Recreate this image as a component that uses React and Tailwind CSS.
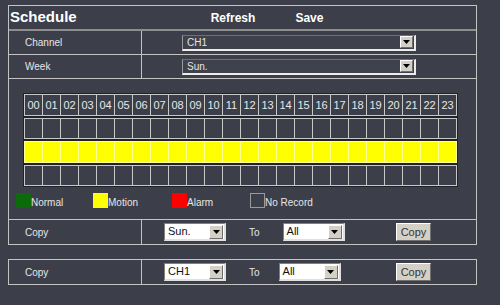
import React from 'react';

const hours = Array.from({ length: 24 }, (_, i) => String(i).padStart(2, '0'));

const Arrow = ({ className = '' }) => (
  <span
    className={`flex items-center justify-center bg-[#d4d0c8] border-t border-l border-t-white border-l-white border-b border-r border-b-[#6e6e6e] border-r-[#6e6e6e] ${className}`}
  >
    <svg width="7" height="4" viewBox="0 0 7 4">
      <path d="M0 0h7L3.5 4z" fill="#000" />
    </svg>
  </span>
);

const DarkSelect = ({ value }) => (
  <div className="flex h-[16px] w-[234px] items-center justify-between border-t border-l border-t-[#707070] border-l-[#9a9a9a] border-b-2 border-r-2 border-b-[#ececec] border-r-[#ececec] bg-[#3f424d] pl-[4px] pr-[1px]">
    <span className="text-[10px] text-[#e6e6e6]">{value}</span>
    <Arrow className="h-[12px] w-[13px]" />
  </div>
);

const WhiteSelect = ({ value }) => (
  <div className="flex h-[18px] w-[62px] items-center justify-between border-t border-l border-t-[#808080] border-l-[#808080] border-b-2 border-r-2 border-b-[#e0e0e0] border-r-[#e0e0e0] bg-white pl-[3px] pr-[1px]">
    <span className="text-[11px] leading-none text-[#111]">{value}</span>
    <Arrow className="h-[14px] w-[14px]" />
  </div>
);

const CopyButton = () => (
  <button className="flex h-[18px] w-[35px] items-center justify-center border-t border-l border-t-white border-l-white border-b border-r border-b-[#707070] border-r-[#707070] bg-[#d4d0c8] text-[11px] text-[#333]">
    Copy
  </button>
);

const CopyRow = ({ from, toLeft }) => (
  <div className="flex h-[24px]">
    <div className="flex w-[133px] items-center border-r border-[#c4c4c4] pl-[16px] text-[10px] text-[#e6e6e6]">
      Copy
    </div>
    <div className="flex flex-1 items-center">
      <div className="ml-[22px]">
        <WhiteSelect value={from} />
      </div>
      <span className="ml-[23px] text-[10px] text-[#e6e6e6]">To</span>
      <div className={toLeft}>
        <WhiteSelect value="All" />
      </div>
      <div className="ml-auto mr-[45px]">
        <CopyButton />
      </div>
    </div>
  </div>
);

const GridRow = ({ height, yellow, labels }) => (
  <div
    className={`flex ${height} border-r border-y ${
      yellow ? 'border-[#ffff99]' : 'border-[#c8c8c8]'
    } outline outline-[#202228]`}
  >
    {hours.map((h) => (
      <div
        key={h}
        className={`flex w-[18px] items-center justify-center border-l ${
          yellow ? 'border-[#ffff99] bg-[#ffff00]' : 'border-[#c8c8c8]'
        } text-[11px] text-[#e8e8e8]`}
      >
        {labels ? h : ''}
      </div>
    ))}
  </div>
);

const Legend = ({ color, label, box }) => (
  <div className="flex items-end">
    <span className={`block h-[15px] w-[15px] ${color} ${box || ''}`} />
    <span className="text-[10px] leading-[11px] text-[#e6e6e6]">{label}</span>
  </div>
);

export default function App() {
  return (
    <div
      className="h-[305px] w-[500px] overflow-hidden bg-[#3c3f4a] pl-[8px] pt-[5px]"
      style={{ fontFamily: '"Liberation Sans", Arial, sans-serif' }}
    >
      <div className="w-[469px] border border-[#c4c4c4]">
        <div className="flex h-[25px] items-center border-b-2 border-[#8e8e8e]">
          <span className="pl-[1px] text-[15px] font-bold text-white">Schedule</span>
          <span className="ml-[134px] text-[12px] font-bold text-white">Refresh</span>
          <span className="ml-[40px] text-[12px] font-bold text-white">Save</span>
        </div>

        {['Channel', 'Week'].map((label, i) => (
          <div key={label} className="flex h-[24px] border-b border-[#c4c4c4]">
            <div className="flex w-[133px] items-center border-r border-[#c4c4c4] pl-[16px] text-[10px] text-[#e6e6e6]">
              {label}
            </div>
            <div className="flex flex-1 items-center pl-[40px]">
              <DarkSelect value={i === 0 ? 'CH1' : 'Sun.'} />
            </div>
          </div>
        ))}

        <div className="border-b border-[#c4c4c4] pl-[7px] pt-[15px] pb-[11px]">
          <div className="ml-[8px] flex w-[433px] flex-col gap-[2px]">
            <GridRow height="h-[22px]" labels />
            <GridRow height="h-[21px]" />
            <GridRow height="h-[22px]" yellow />
            <GridRow height="h-[21px]" />
          </div>
          <div className="mt-[7px] flex">
            <div className="w-[77px]">
              <Legend color="bg-[#0b6b0b]" label="Normal" />
            </div>
            <div className="w-[79px]">
              <Legend color="bg-[#ffff00]" label="Motion" />
            </div>
            <div className="w-[78px]">
              <Legend color="bg-[#ff0000]" label="Alarm" />
            </div>
            <Legend color="bg-transparent" box="border border-[#9a9a9a]" label="No Record" />
          </div>
        </div>

        <CopyRow from="Sun." toLeft="ml-[23px]" />
      </div>

      <div className="mt-[14px] w-[469px] border border-[#c4c4c4]">
        <CopyRow from="CH1" toLeft="ml-[19px]" />
      </div>
    </div>
  );
}
